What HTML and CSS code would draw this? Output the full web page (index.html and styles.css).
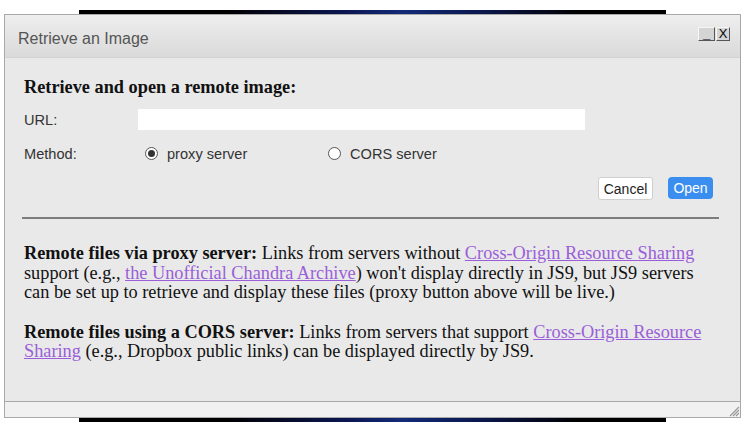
FILE: index.html
```html
<!DOCTYPE html>
<html>
<head>
<meta charset="utf-8">
<link rel="stylesheet" href="styles.css">
</head>
<body>
<div class="backdrop"></div>
<div class="dialog">
  <div class="titlebar">
    <span class="title">Retrieve an Image</span>
    <div class="winbtns">
      <span class="winbtn min">_</span>
      <span class="winbtn close">X</span>
    </div>
  </div>
  <div class="content">
    <div class="heading">Retrieve and open a remote image:</div>
    <div class="row url-row">
      <span class="label">URL:</span>
      <span class="input"></span>
    </div>
    <div class="row method-row">
      <span class="label">Method:</span>
      <span class="option first"><span class="radio checked"></span>proxy server</span>
      <span class="option"><span class="radio"></span>CORS server</span>
    </div>
    <div class="actions">
      <span class="btn cancel">Cancel</span>
      <span class="btn open">Open</span>
    </div>
    <div class="rule"></div>
    <p class="para"><b>Remote files via proxy server:</b> Links from servers without <a class="link">Cross-Origin Resource Sharing</a> support (e.g., <a class="link">the Unofficial Chandra Archive</a>) won't display directly in JS9, but JS9 servers can be set up to retrieve and display these files (proxy button above will be live.)</p>
    <p class="para"><b>Remote files using a CORS server:</b> Links from servers that support <a class="link">Cross-Origin Resource Sharing</a> (e.g., Dropbox public links) can be displayed directly by JS9.</p>
  </div>
  <div class="statusbar">
    <svg class="grip" width="12" height="12" viewBox="0 0 12 12">
      <path d="M11 2 L2 11 M11 5 L5 11 M11 8 L8 11" stroke="#9a9a9a" stroke-width="1.2" fill="none"/>
    </svg>
  </div>
</div>
</body>
</html>
```

FILE: styles.css
```css
html, body {
  margin: 0;
  padding: 0;
  background: #ffffff;
  width: 743px;
  height: 428px;
  overflow: hidden;
}
body {
  padding-top: 10px;
  box-sizing: border-box;
}
.backdrop {
  margin-left: 79px;
  width: 587px;
  height: 412px;
  background: linear-gradient(90deg, #000 0%, #000 25%, #0b1650 45%, #132a78 55%, #0a1548 70%, #000 85%, #000 100%);
}
.dialog {
  position: absolute;
  left: 4px;
  top: 14px;
  width: 737px;
  height: 404px;
  box-sizing: border-box;
  border: 1px solid #a9a9a9;
  background: #e9e9e9;
  display: flex;
  flex-direction: column;
  font-family: "Liberation Sans", Arial, sans-serif;
}
.titlebar {
  height: 43px;
  flex: none;
  display: flex;
  justify-content: space-between;
  align-items: flex-start;
  background: linear-gradient(#eeeeee, #dadada);
  border-bottom: 1px solid #d2d2d2;
  box-sizing: border-box;
  padding: 0 10px 0 13px;
}
.title {
  font-size: 16px;
  color: #555555;
  line-height: 43px;
  padding-top: 2px;
}
.winbtns {
  display: flex;
  gap: 1px;
  margin-top: 12px;
}
.winbtn {
  display: flex;
  align-items: center;
  justify-content: center;
  height: 14px;
  box-sizing: border-box;
  border: 1px solid;
  border-color: #f6f6f6 #555 #555 #f6f6f6;
  background: #d4d4d4;
  color: #000;
  font-size: 13px;
  line-height: 12px;
}
.winbtn.min { width: 17px; font-weight: bold; }
.winbtn.close { width: 14px; }
.content {
  flex: 1;
  padding: 0 20px 0 19px;
  background: #e9e9e9;
  overflow: hidden;
}
.heading {
  margin-top: 19px;
  font-family: "Liberation Serif", "Times New Roman", serif;
  font-weight: bold;
  font-size: 18.3px;
  line-height: 20px;
  color: #111;
}
.row {
  display: flex;
  align-items: center;
  height: 21px;
  font-size: 14.6px;
  color: #333;
}
.url-row { margin-top: 12px; }
.method-row { margin-top: 13px; }
.label {
  width: 121px;
  flex: none;
}
.input {
  width: 447px;
  height: 21px;
  margin-left: -7px;
  background: #ffffff;
}
.option {
  display: flex;
  align-items: center;
  width: 183px;
  flex: none;
}
.radio {
  width: 13px;
  height: 13px;
  box-sizing: border-box;
  border: 1px solid #555;
  border-radius: 50%;
  background: #fff;
  margin-right: 9px;
  position: relative;
}
.radio.checked::after {
  content: "";
  position: absolute;
  left: 2px;
  top: 2px;
  width: 7px;
  height: 7px;
  border-radius: 50%;
  background: #333;
}
.actions {
  margin-top: 13px;
  display: flex;
  justify-content: flex-end;
  gap: 15px;
  padding-right: 7px;
  height: 23px;
}
.btn {
  display: flex;
  align-items: center;
  justify-content: center;
  height: 23px;
  box-sizing: border-box;
  font-size: 14px;
  border-radius: 3px;
}
.cancel {
  width: 55px;
  background: #ffffff;
  border: 1px solid #cfcfcf;
  color: #222;
}
.open {
  width: 45px;
  height: 22px;
  background: #3a8ef0;
  color: #ffffff;
  border-radius: 4px;
}
.rule {
  margin: 17px 1px 0 -2px;
  height: 0;
  border-top: 2px solid #7d7d7d;
}
.para {
  margin: 25px 0 0 0;
  width: 696px;
  font-family: "Liberation Serif", "Times New Roman", serif;
  font-size: 18.3px;
  line-height: 19.6px;
  color: #111;
}
.para + .para { margin-top: 20px; }
.para b { font-weight: bold; }
.link {
  color: #9a5ed8;
  text-decoration: underline;
}
.statusbar {
  height: 15px;
  flex: none;
  border-top: 1px solid #a9a9a9;
  background: #f1f1f1;
  position: relative;
}
.grip {
  position: absolute;
  right: 0;
  bottom: 0;
}
```
